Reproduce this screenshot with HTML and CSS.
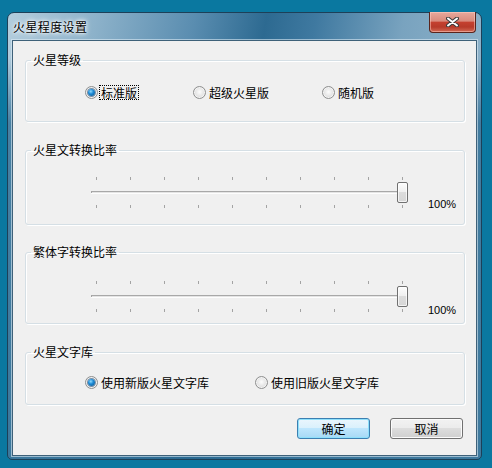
FILE: index.html
```html
<!DOCTYPE html>
<html>
<head>
<meta charset="utf-8">
<title>火星程度设置</title>
<link rel="stylesheet" href="styles.css">
</head>
<body>

<div class="window">
    <div class="titlebar">
        <span class="title">火星程度设置</span>
        <span class="close"><svg width="13" height="10" viewBox="0 0 13 10"><path d="M2 1.5 L11 8.5 M11 1.5 L2 8.5" stroke="#3b3b3b" stroke-width="4" stroke-linecap="round"/><path d="M2 1.5 L11 8.5 M11 1.5 L2 8.5" stroke="#fff" stroke-width="2" stroke-linecap="round"/></svg></span>
    </div>
    <div class="client">
        <fieldset class="group group-level">
            <legend>火星等级</legend>
            <div class="options options-level">
                <label class="option"><span class="radio on"></span><span class="text focus">标准版</span></label>
                <label class="option"><span class="radio"></span><span class="text">超级火星版</span></label>
                <label class="option"><span class="radio"></span><span class="text">随机版</span></label>
            </div>
        </fieldset>

        <fieldset class="group group-mars">
            <legend>火星文转换比率</legend>
            <div class="slider-row">
                <div class="slider">
                    <div class="ticks"></div>
                    <div class="track"><span class="thumb"></span></div>
                    <div class="ticks"></div>
                </div>
                <span class="pct">100%</span>
            </div>
        </fieldset>

        <fieldset class="group group-trad">
            <legend>繁体字转换比率</legend>
            <div class="slider-row">
                <div class="slider">
                    <div class="ticks"></div>
                    <div class="track"><span class="thumb"></span></div>
                    <div class="ticks"></div>
                </div>
                <span class="pct">100%</span>
            </div>
        </fieldset>

        <fieldset class="group group-lib">
            <legend>火星文字库</legend>
            <div class="options options-lib">
                <label class="option"><span class="radio on"></span><span class="text">使用新版火星文字库</span></label>
                <label class="option"><span class="radio"></span><span class="text">使用旧版火星文字库</span></label>
            </div>
        </fieldset>

        <div class="buttons">
            <button class="btn btn-default">确定</button>
            <button class="btn">取消</button>
        </div>
    </div>
</div>

</body>
</html>
```

FILE: styles.css
```css
html, body {margin:0; padding:0;}
body {background:#0a78a0; font:12px "Noto Sans CJK SC", "Liberation Sans", sans-serif; color:#000; height:468px; overflow:hidden;}

/* window frame */
.window {box-sizing:border-box; width:475px; height:448px; margin:12px 0 0 7px; padding:0 4px 3px; border:1px solid #1d4058; border-radius:7px 7px 5px 5px; display:flex; flex-direction:column;
    background:
        linear-gradient(to bottom, rgba(40,105,145,0) 0, rgba(40,105,145,0) 45px, rgba(40,105,145,0.75) 110px, rgba(40,105,145,0.8) 100%),
        linear-gradient(100deg, #b3cddd 0%, #8db2ca 16%, #5a8db0 34%, #2d6a91 47%, #3f79a0 56%, #79a3bf 72%, #9dbdd1 100%);}
.titlebar {height:27px; display:flex; align-items:center; padding-left:1px;}
.title {font-size:12px; letter-spacing:0.4px; color:#000; text-shadow:0 0 6px #fff, 0 0 4px #fff, 0 0 2px rgba(255,255,255,0.8);}
.close {align-self:flex-start; margin:-1px 1px 0 auto; width:45px; height:20px; border:1px solid #5a241c; border-top:none; border-radius:0 0 4px 4px; display:flex; align-items:center; justify-content:center;
    background:linear-gradient(#e6a99c 0%, #d98b7d 45%, #c4402f 52%, #b73a2a 75%, #d26a55 100%); box-shadow:inset 0 0 0 1px rgba(255,210,200,0.5);}
.close svg {display:block;}

/* client area */
.client {flex:1; background:#f0f0f0; border:1px solid #3e6179; box-shadow:0 0 0 1px rgba(220,235,245,0.6); padding:11px 11px 0 12px; display:flex; flex-direction:column;}

/* group boxes */
.group {margin:0; padding:0; min-width:0; border:1px solid #d5dfe5; border-radius:3px; box-shadow:inset 1px 1px 0 #fff, 1px 1px 0 #fff;}
.group legend {margin-left:5px; padding:0 2px; line-height:16px; font-size:12px;}
.group-mars {margin-top:20px;}
.group-trad {margin-top:19px;}
.group-lib {margin-top:20px;}

/* radio options */
.options {display:grid; align-items:center; height:16px; padding-left:59px;}
.options-level {grid-template-columns:108px 129px auto; margin:16px 0 21px;}
.options-lib {grid-template-columns:170px auto; margin:14px 0 14px;}
.option {display:flex; align-items:center; height:16px;}
.radio {box-sizing:border-box; width:13px; height:13px; border:1px solid #8e8f8f; border-radius:50%; display:flex; align-items:center; justify-content:center; flex:none;
    background:radial-gradient(circle at 50% 45%, #fdfdfd 0, #e8e8e8 45%, #cdcdcd 100%); box-shadow:inset 0 0 0 1px #f4f4f4;}
.radio.on::after {content:""; width:7px; height:7px; border-radius:50%; background:radial-gradient(circle at 40% 35%, #8fdcff 0, #1e8bd6 40%, #0b4f86 100%); box-shadow:0 0 0 1px rgba(30,70,110,0.55);}
.text {margin-left:1px; padding:0 1px; border:1px dotted transparent; line-height:13px;}
.text.focus {border-color:#000;}

/* sliders */
.slider-row {display:flex; align-items:flex-end; padding-left:65px;}
.group-mars .slider-row {margin:19px 0 16px;}
.group-trad .slider-row {margin:21px 0 11px;}
.slider {width:320px;}
.ticks {height:3px; width:307px; margin-left:5px; background:repeating-linear-gradient(to right, #a3a3a3 0, #a3a3a3 1px, transparent 1px, transparent 34px);}
.track {height:21px; margin:2px 0; display:flex;
    background:
        linear-gradient(#a5a5a5, #a5a5a5) 0 9px / 1px 2px no-repeat,
        linear-gradient(#a8a8a8, #a8a8a8) 0 9px / 315px 1px no-repeat,
        linear-gradient(#e4e4e4, #e4e4e4) 1px 10px / 314px 1px no-repeat,
        linear-gradient(#fdfdfd, #fdfdfd) 0 11px / 315px 1px no-repeat;}
.thumb {box-sizing:border-box; width:11px; height:21px; margin-left:306px; border:1px solid #707070; border-radius:2px;
    background:linear-gradient(#fdfdfd 0%, #f0f0f0 45%, #dcdcdc 50%, #d6d6d6 100%); box-shadow:inset 0 0 0 1px rgba(255,255,255,0.7);}
.pct {font:11px "Liberation Sans", sans-serif; line-height:13px; margin-left:17px;}
.group-mars .pct {margin-bottom:-3px;}
.group-trad .pct {margin-bottom:-5px;}

/* buttons */
.buttons {display:flex; justify-content:flex-end; gap:20px; margin-top:13px; padding-right:2px;}
.btn {box-sizing:border-box; width:73px; height:21px; padding:0; font:12px "Noto Sans CJK SC", sans-serif; color:#000; border:1px solid #707070; border-radius:3px;
    background:linear-gradient(#f2f2f2 0%, #ebebeb 50%, #dddddd 50%, #cfcfcf 100%); box-shadow:inset 0 0 0 1px #fbfbfb;}
.btn-default {border-color:#3c7fb1; background:linear-gradient(#eaf6fd 0%, #d9f0fc 50%, #bee6fd 50%, #a7d9f5 100%); box-shadow:inset 0 0 0 1px #8ee0fb;}
```
